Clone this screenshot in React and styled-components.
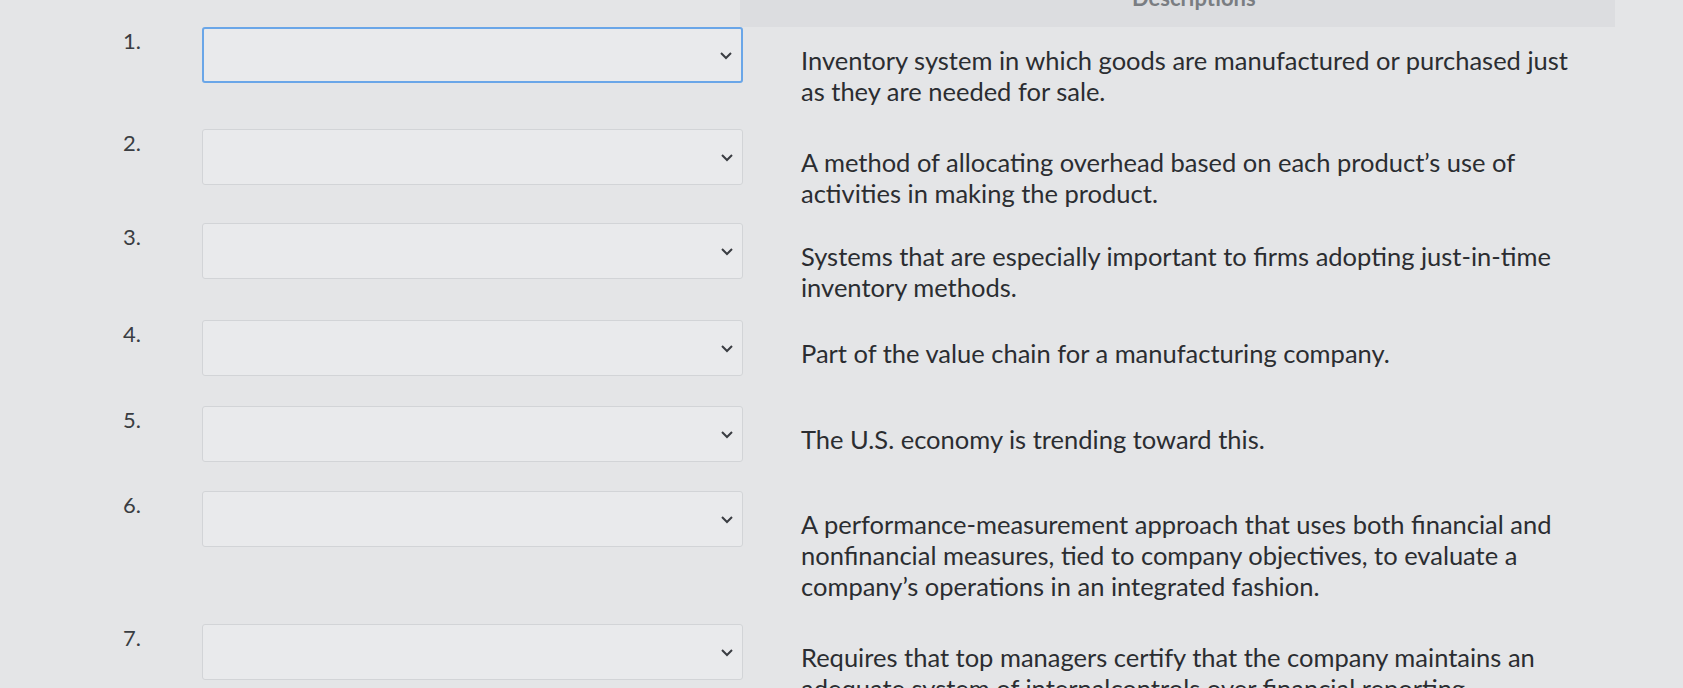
import React from 'react'
import styled, { createGlobalStyle } from 'styled-components'

const Global = createGlobalStyle`
  html, body { margin: 0; background: #e4e5e7; overflow: hidden; }
  body { font-family: Lato, "Open Sans", sans-serif; color: #2e3033; }
`

const rows = [
  { n: '1.', h: 102, active: true, text: ['Inventory system in which goods are manufactured or purchased just', 'as they are needed for sale.'] },
  { n: '2.', h: 94, text: ['A method of allocating overhead based on each product\u2019s use of', 'activities in making the product.'] },
  { n: '3.', h: 97, text: ['Systems that are especially important to firms adopting just-in-time', 'inventory methods.'] },
  { n: '4.', h: 86, text: ['Part of the value chain for a manufacturing company.'] },
  { n: '5.', h: 85, text: ['The U.S. economy is trending toward this.'] },
  { n: '6.', h: 133, text: ['A performance-measurement approach that uses both financial and', 'nonfinancial measures, tied to company objectives, to evaluate a', 'company\u2019s operations in an integrated fashion.'] },
  { n: '7.', h: 100, text: ['Requires that top managers certify that the company maintains an', 'adequate system of internalcontrols over financial reporting'] },
]

function Chevron() {
  return (
    <svg width="14" height="10" viewBox="0 0 14 10">
      <path d="M2 3 L7 8 L12 3" fill="none" stroke="#3a3d42" strokeWidth="2" />
    </svg>
  )
}

export default function App() {
  return (
    <Page>
      <Global />
      <Header><span>Descriptions</span></Header>
      {rows.map(r => (
        <Row key={r.n} $h={r.h}>
          <Num>{r.n}</Num>
          <Select $active={r.active}>
            <Chevron />
          </Select>
          <Desc>
            {r.text.map(t => <div key={t}>{t}</div>)}
          </Desc>
        </Row>
      ))}
    </Page>
  )
}

const Page = styled.div`
  width: 1683px;
  height: 688px;
  overflow: hidden;
`

const Header = styled.div`
  height: 27px;
  margin-left: 740px;
  width: 875px;
  background: #dcdde0;
  position: relative;
  overflow: hidden;
  span {
    position: absolute;
    left: 392px;
    top: -16px;
    font-size: 22px;
    font-weight: 700;
    color: #7a7d82;
  }
`

const Row = styled.div`
  display: flex;
  align-items: flex-start;
  height: ${p => p.$h}px;
`

const Num = styled.div`
  width: 79px;
  padding-left: 123px;
  font-size: 22px;
  color: #3a3d42;
`

const Select = styled.div`
  width: 541px;
  height: 56px;
  flex: none;
  box-sizing: border-box;
  background: #e9eaec;
  border: ${p => (p.$active ? '2px solid #6aa6e8' : '1px solid #d2d4d7')};
  border-radius: 3px;
  display: flex;
  align-items: center;
  justify-content: flex-end;
  padding-right: 8px;
`

const Desc = styled.div`
  margin-left: 58px;
  padding-top: 18px;
  font-size: 25.5px;
  line-height: 31px;
  color: #2b2d31;
  white-space: nowrap;
`
